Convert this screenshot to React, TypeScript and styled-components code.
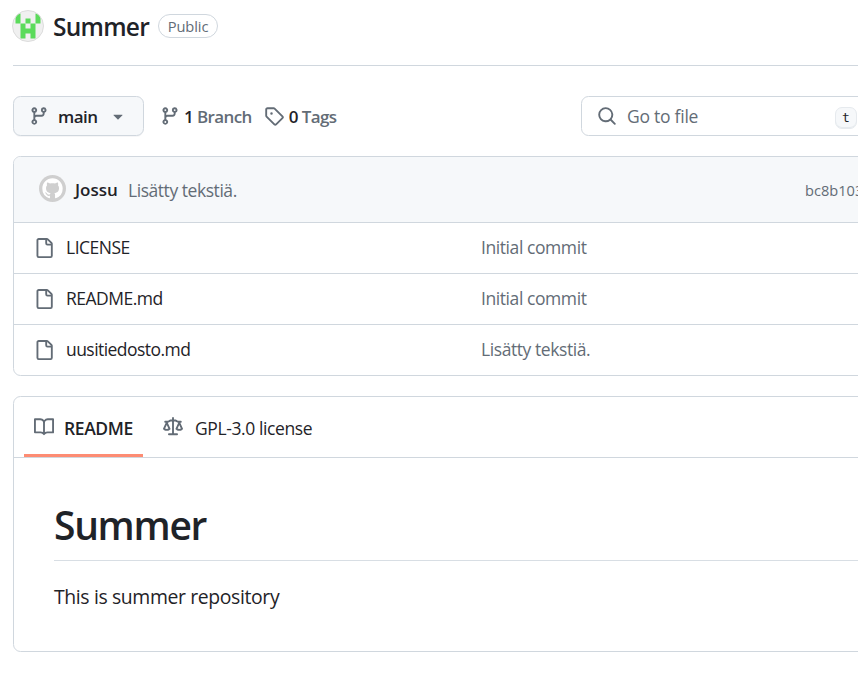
import React from 'react';
import styled, { createGlobalStyle } from 'styled-components';

const GlobalStyle = createGlobalStyle`
  *, *::before, *::after { box-sizing: border-box; }
  body {
    margin: 0;
    background: #fff;
    color: #1f2328;
    font-family: "Open Sans", "Noto Sans", sans-serif;
    font-size: 17.5px;
    overflow: hidden;
  }
`;

const paths = {
  branch:
    'M9.5 3.25a2.25 2.25 0 1 1 3 2.122V6A2.5 2.5 0 0 1 10 8.5H6a1 1 0 0 0-1 1v1.128a2.251 2.251 0 1 1-1.5 0V5.372a2.25 2.25 0 1 1 1.5 0v1.836A2.493 2.493 0 0 1 6 7h4a1 1 0 0 0 1-1v-.628A2.25 2.25 0 0 1 9.5 3.25Zm-6 0a.75.75 0 1 0 1.5 0 .75.75 0 0 0-1.5 0Zm8.25-.75a.75.75 0 1 0 0 1.5.75.75 0 0 0 0-1.5ZM4.25 12a.75.75 0 1 0 0 1.5.75.75 0 0 0 0-1.5Z',
  tag: 'M1 7.775V2.75C1 1.784 1.784 1 2.75 1h5.025c.464 0 .91.184 1.238.513l6.25 6.25a1.75 1.75 0 0 1 0 2.474l-5.026 5.026a1.75 1.75 0 0 1-2.474 0l-6.25-6.25A1.752 1.752 0 0 1 1 7.775Zm1.5 0c0 .066.026.13.073.177l6.25 6.25a.25.25 0 0 0 .354 0l5.025-5.025a.25.25 0 0 0 0-.354l-6.25-6.25a.25.25 0 0 0-.177-.073H2.75a.25.25 0 0 0-.25.25ZM6 5a1 1 0 1 1 0 2 1 1 0 0 1 0-2Z',
  search:
    'M10.68 11.74a6 6 0 0 1-7.922-8.982 6 6 0 0 1 8.982 7.922l3.04 3.04a.749.749 0 0 1-.326 1.275.749.749 0 0 1-.734-.215ZM11.5 7a4.499 4.499 0 1 0-8.997 0A4.499 4.499 0 0 0 11.5 7Z',
  caret:
    'm4.427 7.427 3.396 3.396a.25.25 0 0 0 .354 0l3.396-3.396A.25.25 0 0 0 11.396 7H4.604a.25.25 0 0 0-.177.427Z',
  file: 'M2 1.75C2 .784 2.784 0 3.75 0h6.586c.464 0 .909.184 1.237.513l2.914 2.914c.329.328.513.773.513 1.237v9.586A1.75 1.75 0 0 1 13.25 16h-9.5A1.75 1.75 0 0 1 2 14.25Zm1.75-.25a.25.25 0 0 0-.25.25v12.5c0 .138.112.25.25.25h9.5a.25.25 0 0 0 .25-.25V6h-2.75A1.75 1.75 0 0 1 9 4.25V1.5Zm6.75.062V4.25c0 .138.112.25.25.25h2.688l-.011-.013-2.914-2.914-.013-.011Z',
  book: 'M0 1.75A.75.75 0 0 1 .75 1h4.253c1.227 0 2.317.59 3 1.501A3.743 3.743 0 0 1 11.006 1h4.245a.75.75 0 0 1 .75.75v10.5a.75.75 0 0 1-.75.75h-4.507a2.25 2.25 0 0 0-1.591.659l-.622.621a.75.75 0 0 1-1.06 0l-.622-.621A2.25 2.25 0 0 0 5.258 13H.75a.75.75 0 0 1-.75-.75Zm7.251 10.324.004-5.073-.002-2.253A2.25 2.25 0 0 0 5.003 2.5H1.5v9h3.757a3.75 3.75 0 0 1 1.994.574ZM8.755 4.75l-.004 7.322a3.752 3.752 0 0 1 1.992-.572H14.5v-9h-3.495a2.25 2.25 0 0 0-2.25 2.25Z',
  law: 'M8.75.75V2h.985c.304 0 .603.08.867.231l1.29.736c.038.022.08.033.124.033h2.234a.75.75 0 0 1 0 1.5h-.427l2.111 4.692a.75.75 0 0 1-.154.838l-.53-.53.529.531-.001.002-.002.002-.006.006-.006.005-.01.01-.045.04c-.21.176-.441.327-.686.45C14.556 10.78 13.88 11 13 11a4.498 4.498 0 0 1-2.023-.454 3.544 3.544 0 0 1-.686-.45l-.045-.04-.016-.015-.006-.006-.004-.004v-.001a.75.75 0 0 1-.154-.838L12.178 4.5h-.162c-.305 0-.604-.079-.868-.231l-1.29-.736a.245.245 0 0 0-.124-.033H8.75V13h2.5a.75.75 0 0 1 0 1.5h-6.5a.75.75 0 0 1 0-1.5h2.5V3.5h-.984a.245.245 0 0 0-.124.033l-1.289.737c-.265.15-.564.23-.869.23h-.162l2.112 4.692a.75.75 0 0 1-.154.838l-.53-.53.529.531-.001.002-.002.002-.006.006-.016.015-.045.04c-.21.176-.441.327-.686.45C4.556 10.78 3.88 11 3 11a4.498 4.498 0 0 1-2.023-.454 3.544 3.544 0 0 1-.686-.45l-.045-.04-.016-.015-.006-.006-.004-.004v-.001a.75.75 0 0 1-.154-.838L2.178 4.5H1.75a.75.75 0 0 1 0-1.5h2.234a.249.249 0 0 0 .125-.033l1.288-.737c.265-.15.564-.23.869-.23h.984V.75a.75.75 0 0 1 1.5 0Zm2.945 8.477c.285.135.718.273 1.305.273s1.02-.138 1.305-.273L13 6.327Zm-10 0c.285.135.718.273 1.305.273s1.02-.138 1.305-.273L3 6.327Z',
  github:
    'M8 0c4.42 0 8 3.58 8 8a8.013 8.013 0 0 1-5.45 7.59c-.4.08-.55-.17-.55-.38 0-.27.01-1.13.01-2.2 0-.75-.25-1.23-.54-1.48 1.78-.2 3.65-.88 3.65-3.95 0-.88-.31-1.59-.82-2.15.08-.2.36-1.02-.08-2.12 0 0-.67-.22-2.2.82-.64-.18-1.32-.27-2-.27-.68 0-1.36.09-2 .27-1.53-1.03-2.2-.82-2.2-.82-.44 1.1-.16 1.92-.08 2.12-.51.56-.82 1.28-.82 2.15 0 3.06 1.86 3.75 3.64 3.95-.23.2-.44.55-.51 1.07-.46.21-1.61.55-2.33-.66-.15-.24-.6-.83-1.23-.82-.67.01-.27.38.01.53.34.19.73.9.82 1.13.16.45.68 1.31 2.69.94 0 .67.01 1.3.01 1.49 0 .21-.15.45-.55.38A7.995 7.995 0 0 1 0 8c0-4.42 3.58-8 8-8Z',
};

const IconSvg = styled.svg`
  display: block;
  flex: none;
  fill: #636c76;
`;

function Icon({ name, size = 20 }: { name: keyof typeof paths; size?: number }) {
  return (
    <IconSvg width={size} height={size} viewBox="0 0 16 16" aria-hidden>
      <path d={paths[name]} />
    </IconSvg>
  );
}

const Page = styled.div`
  width: 858px;
  height: 697px;
  padding-left: 13px;
  overflow: hidden;
`;

const Header = styled.header`
  display: flex;
  align-items: center;
  height: 66px;
  padding-bottom: 13px;
  border-bottom: 1px solid #d0d7de;
`;

const RepoAvatar = styled.svg`
  display: block;
  flex: none;
  width: 32px;
  height: 32px;
  margin-left: -1px;
`;

const RepoName = styled.strong`
  width: 97px;
  margin-left: 9px;
  padding-top: 1px;
  font-size: 24.5px;
  font-weight: 600;
  letter-spacing: -0.75px;
  line-height: 32px;
`;

const Badge = styled.span`
  display: flex;
  align-items: center;
  justify-content: center;
  width: 60px;
  height: 24px;
  margin-left: 8px;
  border: 1px solid #d0d7de;
  border-radius: 12px;
  color: #636c76;
  font-size: 14.7px;
  font-weight: 500;
  letter-spacing: -0.1px;
`;

const Toolbar = styled.div`
  display: flex;
  align-items: center;
  height: 40px;
  margin-top: 30px;
`;

const BranchButton = styled.button`
  display: flex;
  align-items: center;
  width: 131px;
  height: 40px;
  padding: 0 0 0 15px;
  border: 1px solid #d0d7de;
  border-radius: 7.5px;
  background: #f6f8fa;
  box-shadow: 0 1px 0 rgba(31, 35, 40, 0.04);
  color: #1f2328;
  font: 600 17px/24px "Open Sans", sans-serif;
`;

const BranchName = styled.span`
  width: 50px;
  margin-left: 9px;
  padding-top: 1px;
  letter-spacing: -0.5px;
  text-align: left;
`;

const Stat = styled.a<{ $gap: number; $space: number }>`
  display: flex;
  align-items: center;
  margin-left: ${(p) => p.$gap}px;
  color: #636c76;
  font-size: 17px;
  font-weight: 600;
  letter-spacing: -0.6px;
  white-space: pre;
  & > span { margin-left: ${(p) => p.$space}px; }
  & b { color: #1f2328; font-weight: 600; }
`;

const SearchBox = styled.div`
  display: flex;
  align-items: center;
  flex: none;
  width: 300px;
  height: 40px;
  margin-left: auto;
  margin-right: -23px;
  padding-left: 15px;
  border: 1px solid #d0d7de;
  border-radius: 7.5px;
  color: #636c76;
`;

const Placeholder = styled.span`
  width: 208px;
  margin-left: 10px;
  letter-spacing: -0.25px;
`;

const Key = styled.kbd`
  display: flex;
  align-items: center;
  justify-content: center;
  width: 22px;
  height: 22px;
  margin-top: 3px;
  border: 1px solid #e6eaee;
  border-radius: 7px;
  box-shadow: inset 0 -1px 0 #e6eaee;
  background: #f6f8fa;
  color: #1f2328;
  font: 13px "DejaVu Sans Mono", monospace;
`;

const Panel = styled.section`
  width: 900px;
  margin-top: 20px;
  border: 1px solid #d0d7de;
  border-radius: 7.5px;
  overflow: hidden;
`;

const CommitBar = styled.div`
  display: flex;
  align-items: center;
  height: 65px;
  padding-left: 25px;
  background: #f6f8fa;
`;

const UserAvatar = styled.svg`
  display: block;
  flex: none;
  width: 27px;
  height: 27px;
  margin-top: -3px;
`;

const Author = styled.strong`
  width: 44px;
  margin-left: 9px;
  font-size: 17px;
  font-weight: 600;
`;

const Message = styled.span`
  margin-left: 9px;
  color: #636c76;
  letter-spacing: -0.45px;
`;

const Hash = styled.span`
  width: 80px;
  margin-left: auto;
  margin-right: 27px;
  color: #636c76;
  font-size: 14.6px;
`;

const FileRow = styled.div`
  display: grid;
  grid-template-columns: 20px 403px 1fr;
  column-gap: 12px;
  align-items: center;
  height: 51px;
  padding-left: 20px;
  border-top: 1px solid #d0d7de;
  & > span { margin-top: -2px; }
`;

const FileName = styled.span<{ $track: number }>`
  letter-spacing: ${(p) => p.$track}px;
`;

const FileMessage = styled.span`
  color: #636c76;
  letter-spacing: -0.42px;
`;

const Tabs = styled.nav`
  display: flex;
  height: 61px;
  padding-left: 10px;
  border-bottom: 1px solid #d0d7de;
`;

const Tab = styled.a<{ $active?: boolean }>`
  display: flex;
  align-items: center;
  gap: ${(p) => (p.$active ? 10 : 12)}px;
  width: ${(p) => (p.$active ? 119 : 180)}px;
  margin-right: 20px;
  padding-left: ${(p) => (p.$active ? 10 : 0)}px;
  border-bottom: 3px solid ${(p) => (p.$active ? '#fd8c73' : 'transparent')};
  font-weight: ${(p) => (p.$active ? 600 : 400)};
  letter-spacing: -0.4px;
  & > svg { margin-top: 3px; }
  & > span { margin-top: 5px; white-space: nowrap; }
`;

const Article = styled.article`
  height: 193px;
  padding: 40px 40px 0;
`;

const Title = styled.h1`
  height: 63px;
  margin: 0 0 20px;
  border-bottom: 1px solid #d8dee4;
  font-size: 39px;
  font-weight: 600;
  line-height: 54px;
  letter-spacing: -1.3px;
`;

const Paragraph = styled.p`
  margin: 0;
  padding-top: 1px;
  font-size: 19.4px;
  line-height: 30px;
  letter-spacing: -0.37px;
`;

const files = [
  { name: 'LICENSE', message: 'Initial commit', track: -0.5 },
  { name: 'README.md', message: 'Initial commit', track: -0.5 },
  { name: 'uusitiedosto.md', message: 'Lisätty tekstiä.', track: -0.55 },
];

export default function App() {
  return (
    <>
      <GlobalStyle />
      <Page>
        <Header>
          <RepoAvatar viewBox="0 0 32 32">
            <clipPath id="round">
              <circle cx="16" cy="16" r="15.5" />
            </clipPath>
            <circle cx="16" cy="16" r="15.5" fill="#f0f0f0" />
            <g clipPath="url(#round)" fill="#5bdb5b">
              <path d="M3.5 3.5h5v10h-5ZM23.5 3.5h5v10h-5ZM13.5 8.5h5v5h-5Z" />
              <path d="M8.5 13.5h5v5h5v-5h5v15h-5v-5h-5v5h-5Z" />
            </g>
            <circle cx="16" cy="16" r="15.5" fill="none" stroke="#dcdcdc" />
          </RepoAvatar>
          <RepoName>Summer</RepoName>
          <Badge>Public</Badge>
        </Header>

        <Toolbar>
          <BranchButton>
            <Icon name="branch" />
            <BranchName>main</BranchName>
            <Icon name="caret" />
          </BranchButton>
          <Stat $gap={16} $space={4}>
            <Icon name="branch" />
            <span><b>1</b> Branch</span>
          </Stat>
          <Stat $gap={12} $space={5}>
            <Icon name="tag" />
            <span><b>0</b> Tags</span>
          </Stat>
          <SearchBox>
            <Icon name="search" />
            <Placeholder>Go to file</Placeholder>
            <Key>t</Key>
          </SearchBox>
        </Toolbar>

        <Panel>
          <CommitBar>
            <UserAvatar viewBox="0 0 27 27">
              <circle cx="13.5" cy="13.5" r="13.5" fill="#cfcfcf" />
              <path d={paths.github} fill="#fff" transform="translate(3.3 3.3) scale(1.275)" />
            </UserAvatar>
            <Author>Jossu</Author>
            <Message>Lisätty tekstiä.</Message>
            <Hash>bc8b103</Hash>
          </CommitBar>
          {files.map((f) => (
            <FileRow key={f.name}>
              <Icon name="file" />
              <FileName $track={f.track}>{f.name}</FileName>
              <FileMessage>{f.message}</FileMessage>
            </FileRow>
          ))}
        </Panel>

        <Panel>
          <Tabs>
            <Tab $active>
              <Icon name="book" />
              <span>README</span>
            </Tab>
            <Tab>
              <Icon name="law" />
              <span>GPL-3.0 license</span>
            </Tab>
          </Tabs>
          <Article>
            <Title>Summer</Title>
            <Paragraph>This is summer repository</Paragraph>
          </Article>
        </Panel>
      </Page>
    </>
  );
}
